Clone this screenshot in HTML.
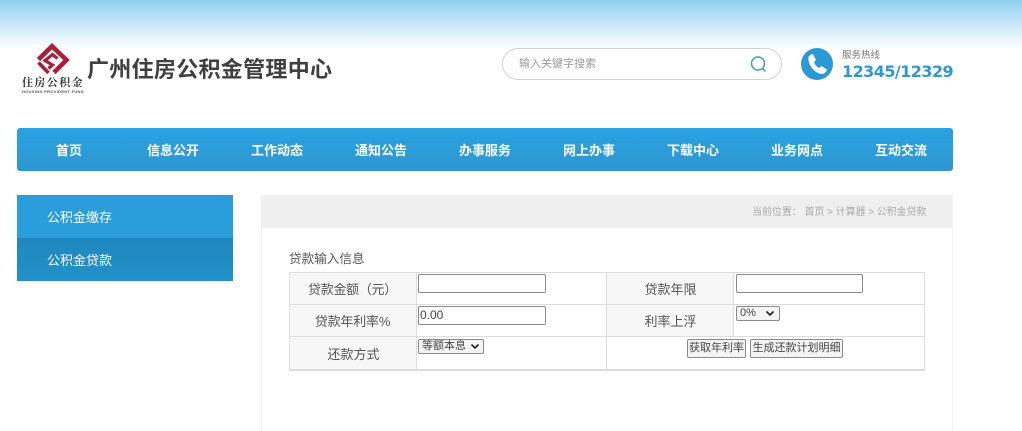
<!DOCTYPE html>
<html><head><meta charset="utf-8">
<style>
html,body{margin:0;padding:0;background:#fff;}
#p{position:relative;width:1022px;height:431px;overflow:hidden;background:#fff;font-family:"Liberation Sans","Noto Sans CJK SC",sans-serif;color:#555;}
#p div,#p span.a{position:absolute;white-space:nowrap;}
.t{line-height:1;}
.nav{top:142px;font-size:13px;font-weight:bold;color:#fff;line-height:17px;width:80px;text-align:center;}
.lab{font-size:13px;color:#555;line-height:16px;text-align:center;}
.inp{background:#fff;border:1px solid #8a8a8a;border-radius:2px;box-sizing:border-box;height:19px;width:128px;font-size:12px;line-height:17px;padding-left:1px;color:#444;}
.sel,.btn{background:#f4f4f4;border:1px solid #8a8a8a;border-radius:2px;box-sizing:border-box;color:#444;font-size:11px;}
.line{background:#dcdcdc;}
</style></head><body>
<div id="p">
<div style="left:0;top:0;width:1022px;height:50px;background:linear-gradient(#8fcff0 0,#c4e5f6 22px,#e9f5fb 38px,#fff 50px);"></div>

<svg style="position:absolute;left:30px;top:40px" width="45" height="36" viewBox="0 0 45 36">
<path d="M8.5 19.5 L22 6.2 L36.5 20 L24 32.5" fill="none" stroke="#a81f3a" stroke-width="4.6"/>
<path d="M8.5 22.5 L18.5 33" fill="none" stroke="#a81f3a" stroke-width="3.6"/>
<path d="M27.5 18.5 L22.5 14.5 L15 20.5 L22.5 25 L18.5 28.5" fill="none" stroke="#a81f3a" stroke-width="3.2"/>
</svg>
<div class="t" style="left:22px;top:78px;font-size:11px;font-weight:bold;color:#333;letter-spacing:1.4px;font-family:'Liberation Serif','Noto Serif CJK SC',serif;">住房公积金</div>
<div class="t" style="left:22px;top:90px;font-size:4px;color:#555;letter-spacing:.3px;font-weight:bold;">HOUSING PROVIDENT FUND</div>
<div class="t" style="left:87px;top:59px;font-size:22px;font-weight:bold;color:#3f3f3f;letter-spacing:.3px;">广州住房公积金管理中心</div>

<div style="left:502px;top:48px;width:280px;height:32px;box-sizing:border-box;border:1px solid #d2d2d2;border-radius:16px;background:#fff;"></div>
<div class="t" style="left:519px;top:59px;font-size:11px;color:#999;">输入关键字搜索</div>
<svg style="position:absolute;left:749px;top:54px" width="20" height="20" viewBox="0 0 20 20"><circle cx="9" cy="9.5" r="6.5" fill="none" stroke="#3c9bcd" stroke-width="1.5"/><path d="M13.5 14.5 L16.5 17.5" stroke="#3c9bcd" stroke-width="1.5" fill="none"/></svg>

<svg style="position:absolute;left:801px;top:48px" width="32" height="32" viewBox="0 0 32 32"><circle cx="16" cy="16" r="16" fill="#2b9ad4"/><path d="M7.5 9 C8.5 7.5 10.5 6 12 6 L15 12 L13 14 C13.7 16.5 15.5 18.5 18 20 L20.5 18 L26 21.5 C25.5 24 23 26 21 26 C13.5 25.5 6.5 16.5 7.5 9 Z" fill="#fff"/></svg>
<div class="t" style="left:842px;top:51px;font-size:9.5px;color:#777;">服务热线</div>
<div class="t" style="left:842px;top:64px;font-size:16px;font-weight:bold;color:#2f97d2;font-family:'DejaVu Sans',sans-serif;letter-spacing:-.55px;">12345/12329</div>

<div style="left:17px;top:128px;width:936px;height:43px;border-radius:3px;background:linear-gradient(#28a2e2,#2f97d0);"></div>
<div class="nav" style="left:29px;">首页</div>
<div class="nav" style="left:133px;">信息公开</div>
<div class="nav" style="left:237px;">工作动态</div>
<div class="nav" style="left:341px;">通知公告</div>
<div class="nav" style="left:445px;">办事服务</div>
<div class="nav" style="left:549px;">网上办事</div>
<div class="nav" style="left:653px;">下载中心</div>
<div class="nav" style="left:757px;">业务网点</div>
<div class="nav" style="left:861px;">互动交流</div>

<div style="left:17px;top:195px;width:216px;height:43px;background:#2a9ddc;"></div>
<div style="left:17px;top:238px;width:216px;height:43px;background:linear-gradient(#1f87bd,#2291cb);"></div>
<div class="t" style="left:47px;top:211px;font-size:13px;color:#fff;">公积金缴存</div>
<div class="t" style="left:47px;top:254px;font-size:13px;color:#fff;">公积金贷款</div>

<div style="left:261px;top:195px;width:692px;height:237px;box-sizing:border-box;border:1px solid #f3f3f3;background:#fff;"></div>
<div style="left:261px;top:195px;width:692px;height:33px;background:#efefef;"></div>
<div class="t" style="left:752px;top:208px;font-size:10px;color:#aaa;letter-spacing:-.05px;">当前位置：&nbsp;首页 &gt; 计算器 &gt; 公积金贷款</div>

<div class="t" style="left:289px;top:253px;font-size:12.6px;color:#555;">贷款输入信息</div>

<div style="left:289px;top:272px;width:127px;height:97px;background:#f7f7f7;"></div>
<div style="left:606px;top:272px;width:127px;height:65px;background:#f7f7f7;"></div>
<div class="line" style="left:289px;top:272px;width:636px;height:1px;"></div>
<div class="line" style="left:289px;top:304px;width:636px;height:1px;"></div>
<div class="line" style="left:289px;top:336px;width:636px;height:1px;"></div>
<div class="line" style="left:289px;top:369px;width:636px;height:2px;"></div>
<div class="line" style="left:289px;top:272px;width:1px;height:98px;"></div>
<div class="line" style="left:416px;top:272px;width:1px;height:98px;"></div>
<div class="line" style="left:606px;top:272px;width:1px;height:98px;"></div>
<div class="line" style="left:733px;top:272px;width:1px;height:65px;"></div>
<div class="line" style="left:924px;top:272px;width:1px;height:98px;"></div>

<div class="lab" style="left:289px;top:282px;width:127px;letter-spacing:-.3px;">贷款金额（元）</div>
<div class="lab" style="left:289px;top:314px;width:127px;letter-spacing:-.2px;">贷款年利率%</div>
<div class="lab" style="left:290px;top:347px;width:127px;">还款方式</div>
<div class="lab" style="left:607px;top:282px;width:127px;">贷款年限</div>
<div class="lab" style="left:607px;top:314px;width:127px;">利率上浮</div>

<div class="inp" style="left:418px;top:274px;"></div>
<div class="inp" style="left:418px;top:306px;">0.00</div>
<div class="inp" style="left:736px;top:274px;width:127px;"></div>

<div class="sel" style="left:418px;top:339px;width:66px;height:15px;line-height:13px;padding-left:3px;">等额本息</div>
<svg style="position:absolute;left:470px;top:343px" width="10" height="7" viewBox="0 0 10 7"><path d="M1.5 1.5 L5 5 L8.5 1.5" fill="none" stroke="#222" stroke-width="1.6"/></svg>
<div class="sel" style="left:736px;top:306px;width:44px;height:15px;line-height:13px;padding-left:3px;">0%</div>
<svg style="position:absolute;left:765px;top:310px" width="10" height="7" viewBox="0 0 10 7"><path d="M1.5 1.5 L5 5 L8.5 1.5" fill="none" stroke="#222" stroke-width="1.6"/></svg>

<div class="btn" style="left:687px;top:339px;width:59px;height:19px;line-height:17px;text-align:center;">获取年利率</div>
<div class="btn" style="left:750px;top:339px;width:93px;height:19px;line-height:17px;text-align:center;">生成还款计划明细</div>
</div>
</body></html>
